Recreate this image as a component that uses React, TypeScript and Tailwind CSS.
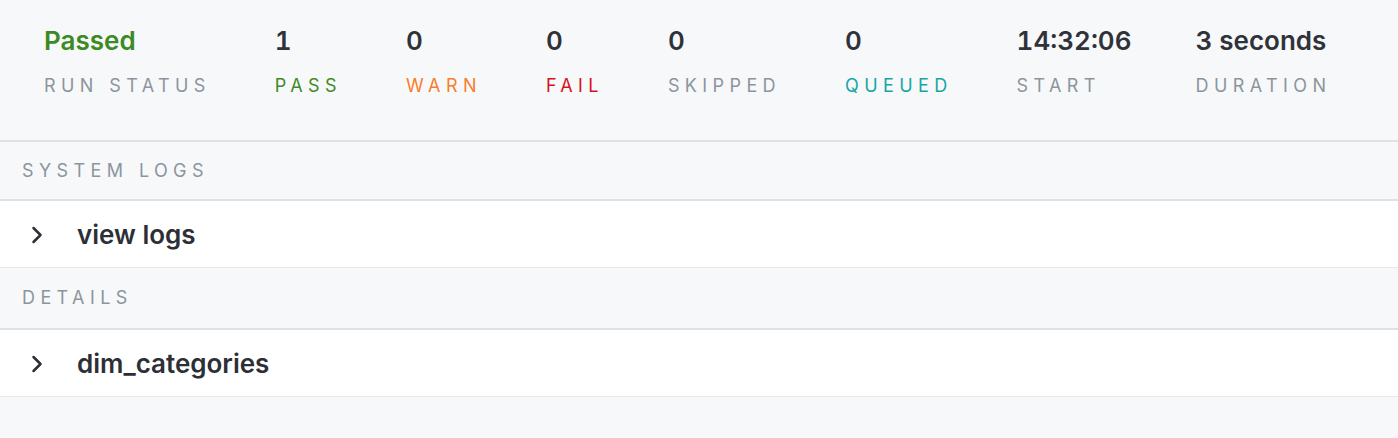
import { ReactNode } from 'react';

// 运行结果概览

interface Stat {
  value: string;
  label: string;
  valueColor?: string;
  labelColor: string;
}

const stats: Stat[] = [
  { value: 'Passed', label: 'Run Status', valueColor: 'text-[#3b8a24]', labelColor: 'text-[#8b959d]' },
  { value: '1', label: 'Pass', labelColor: 'text-[#3f8b25]' },
  { value: '0', label: 'Warn', labelColor: 'text-[#f97d2c]' },
  { value: '0', label: 'Fail', labelColor: 'text-[#d6121b]' },
  { value: '0', label: 'Skipped', labelColor: 'text-[#8b959d]' },
  { value: '0', label: 'Queued', labelColor: 'text-[#15a6a6]' },
  { value: '14:32:06', label: 'Start', labelColor: 'text-[#8b959d]' },
  { value: '3 seconds', label: 'Duration', labelColor: 'text-[#8b959d]' },
];

function Chevron() {
  return (
    <svg width="14" height="20" viewBox="0 0 14 20" fill="none" className="shrink-0">
      <path
        d="M3.5 3 L10.5 10 L3.5 17"
        stroke="#2e3037"
        strokeWidth="2.5"
        strokeLinecap="round"
        strokeLinejoin="round"
      />
    </svg>
  );
}

function SectionHeader({ children, className = '' }: { children: ReactNode; className?: string }) {
  return (
    <div
      className={`flex items-center px-[22px] border-b-2 border-[#dfe1e6] text-[18px] leading-6 uppercase tracking-[0.3em] text-[#8b959d] ${className}`}
    >
      {children}
    </div>
  );
}

function ExpandRow({ title }: { title: string }) {
  return (
    <div className="h-[67px] flex items-center bg-white border-b border-[#e6e7ea] pl-[30px] pt-[2px]">
      <Chevron />
      <span className="ml-[33px] text-[26px] leading-8 font-semibold text-[#2d2f36]">{title}</span>
    </div>
  );
}

export default function App() {
  return (
    <div className="min-h-[438px] bg-[#f7f8fa] font-['Inter','Liberation_Sans',sans-serif]">
      {/* 统计 */}
      <div className="h-[142px] flex gap-[64px] pl-[44px] pt-[26px] border-b-2 border-[#dfe1e6]">
        {stats.map((s) => (
          <div key={s.label} className="flex flex-col">
            <span className={`text-[26px] leading-[30px] font-semibold tabular-nums ${s.valueColor ?? 'text-[#30323a]'}`}>
              {s.value}
            </span>
            <span className={`mt-[19px] text-[18px] leading-[22px] uppercase tracking-[0.3em] ${s.labelColor}`}>
              {s.label}
            </span>
          </div>
        ))}
      </div>

      <SectionHeader className="h-[59px]">System Logs</SectionHeader>
      <ExpandRow title="view logs" />

      <SectionHeader className="h-[62px]">Details</SectionHeader>
      <ExpandRow title="dim_categories" />
    </div>
  );
}
